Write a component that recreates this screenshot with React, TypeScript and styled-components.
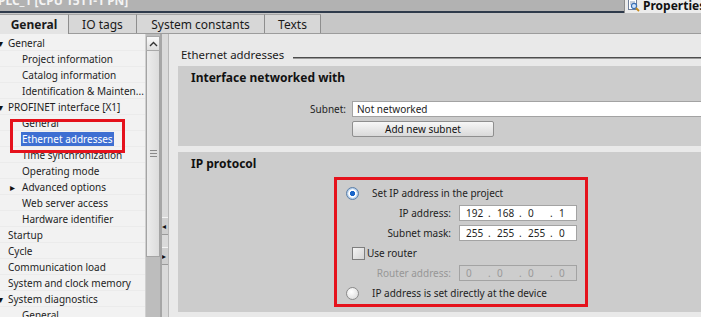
import styled, { createGlobalStyle } from 'styled-components';

const GlobalStyle = createGlobalStyle`
  html, body {
    margin: 0;
    padding: 0;
    background: #e9e9e9;
  }
  body {
    font-family: "Noto Sans", "DejaVu Sans", sans-serif;
    color: #1e1e1e;
  }
`;

type TreeItem = {
  label: string;
  level: 0 | 1;
  arrow?: 'down' | 'right';
  selected?: boolean;
};

const treeItems: TreeItem[] = [
  { label: 'General', level: 0, arrow: 'down' },
  { label: 'Project information', level: 1 },
  { label: 'Catalog information', level: 1 },
  { label: 'Identification & Mainten...', level: 1 },
  { label: 'PROFINET interface [X1]', level: 0, arrow: 'down' },
  { label: 'General', level: 1 },
  { label: 'Ethernet addresses', level: 1, selected: true },
  { label: 'Time synchronization', level: 1 },
  { label: 'Operating mode', level: 1 },
  { label: 'Advanced options', level: 1, arrow: 'right' },
  { label: 'Web server access', level: 1 },
  { label: 'Hardware identifier', level: 1 },
  { label: 'Startup', level: 0 },
  { label: 'Cycle', level: 0 },
  { label: 'Communication load', level: 0 },
  { label: 'System and clock memory', level: 0 },
  { label: 'System diagnostics', level: 0, arrow: 'down' },
  { label: 'General', level: 1 },
];

const tabs = ['General', 'IO tags', 'System constants', 'Texts'];
const tabWidths = [69, 68, 128, 56];

// 4 octets of an IP like field
const IpValue = ({ parts, disabled }: { parts: string[]; disabled?: boolean }) => (
  <IpField $disabled={disabled}>
    {parts.map((p, i) => (
      <Octet key={i}>
        <OctetNum>{p}</OctetNum>
        {i < 3 && <OctetDot>.</OctetDot>}
      </Octet>
    ))}
  </IpField>
);

const PropertiesIcon = () => (
  <svg width="13" height="13" viewBox="0 0 13 13">
    <rect x="1.5" y="0.5" width="8" height="10" fill="#ffffff" stroke="#6f7f9a" />
    <line x1="3" y1="3" x2="8" y2="3" stroke="#8fa0bd" />
    <line x1="3" y1="5" x2="7" y2="5" stroke="#8fa0bd" />
    <circle cx="7" cy="7" r="2.6" fill="#cfe3fb" stroke="#3a6fb5" strokeWidth="1.2" />
    <line x1="9" y1="9" x2="12" y2="12" stroke="#c68a1d" strokeWidth="1.8" />
  </svg>
);

export default function App() {
  return (
    <>
      <GlobalStyle />
      <Root>
        <TitleBar>
          <TitleArea>
            <TitleText>PLC_1 [CPU 1511-1 PN]</TitleText>
          </TitleArea>
          <PropertiesTab>
            <PropertiesIcon />
            <span>Properties</span>
          </PropertiesTab>
        </TitleBar>

        <TabStrip>
          {tabs.map((t, i) => (
            <Tab key={t} $active={i === 0} $width={tabWidths[i]}>
              {t}
            </Tab>
          ))}
        </TabStrip>

        <Body>
          <Tree>
            {treeItems.map((item, i) => (
              <TreeRow key={i} $level={item.level}>
                {item.arrow && <Arrow $level={item.level}>{item.arrow === 'down' ? '▾' : '▸'}</Arrow>}
                <TreeLabel $selected={item.selected}>{item.label}</TreeLabel>
              </TreeRow>
            ))}
            <Highlight />
          </Tree>

          <ScrollBar>
            <ScrollButton>
              <svg width="9" height="6" viewBox="0 0 9 6">
                <path d="M1 5 L4.5 1.5 L8 5" fill="none" stroke="#333" strokeWidth="1.4" />
              </svg>
            </ScrollButton>
            <Thumb>
              <Grip />
            </Thumb>
          </ScrollBar>

          <Splitter>
            <SplitButton>◂</SplitButton>
            <SplitButton>▸</SplitButton>
          </Splitter>

          <Main>
            <HeadingRow>
              <HeadingText>Ethernet addresses</HeadingText>
              <Rule />
            </HeadingRow>

            <Panel $height={80}>
              <PanelTitle>Interface networked with</PanelTitle>
              <SubnetRow>
                <SubnetLabel>Subnet:</SubnetLabel>
                <TextField>Not networked</TextField>
              </SubnetRow>
              <Button>Add new subnet</Button>
            </Panel>

            <Panel $height={160}>
              <PanelTitle>IP protocol</PanelTitle>
              <Marked>
                <FormRow>
                  <Radio $checked />
                  <RadioLabel>Set IP address in the project</RadioLabel>
                </FormRow>
                <FormRow>
                  <FieldLabel>IP address:</FieldLabel>
                  <IpValue parts={['192', '168', '0', '1']} />
                </FormRow>
                <FormRow>
                  <FieldLabel>Subnet mask:</FieldLabel>
                  <IpValue parts={['255', '255', '255', '0']} />
                </FormRow>
                <FormRow>
                  <Checkbox />
                  <CheckLabel>Use router</CheckLabel>
                </FormRow>
                <FormRow>
                  <FieldLabel $disabled>Router address:</FieldLabel>
                  <IpValue parts={['0', '0', '0', '0']} disabled />
                </FormRow>
                <FormRow>
                  <Radio />
                  <RadioLabel>IP address is set directly at the device</RadioLabel>
                </FormRow>
              </Marked>
            </Panel>
          </Main>
        </Body>
      </Root>
    </>
  );
}

const Root = styled.div`
  width: 701px;
  height: 317px;
  overflow: hidden;
  display: flex;
  flex-direction: column;
  background: #e9e9e9;
`;

const TitleBar = styled.div`
  display: flex;
  height: 13px;
  flex-shrink: 0;
`;

const TitleArea = styled.div`
  flex: 1;
  height: 11px;
  background: #b2b2b2;
  border-bottom: 2px solid #2e3a4b;
  overflow: hidden;
`;

const TitleText = styled.div`
  margin: -6px 0 0 -2px;
  font-size: 12px;
  font-weight: bold;
  line-height: 14px;
  color: #f4f4f4;
  white-space: nowrap;
`;

const PropertiesTab = styled.div`
  width: 74px;
  height: 13px;
  display: flex;
  align-items: center;
  gap: 3px;
  padding-left: 2px;
  background: #ececec;
  border-left: 1px solid #8c8c8c;
  overflow: hidden;
  font-size: 12px;
  font-weight: bold;
  color: #111;
  white-space: nowrap;

  svg {
    flex-shrink: 0;
    margin-top: -3px;
  }
  span {
    margin-top: -2px;
  }
`;

const TabStrip = styled.div`
  height: 20px;
  flex-shrink: 0;
  display: flex;
  align-items: flex-end;
  background: #c7c7c7;
  border-bottom: 1px solid #9c9c9c;
`;

const Tab = styled.div<{ $active?: boolean; $width: number }>`
  box-sizing: border-box;
  width: ${(p) => p.$width}px;
  height: ${(p) => (p.$active ? 20 : 19)}px;
  margin-bottom: ${(p) => (p.$active ? -1 : 0)}px;
  display: flex;
  align-items: center;
  justify-content: center;
  background: ${(p) => (p.$active ? '#e4e4e4' : '#d7d7d7')};
  border-top: 1px solid #a5a5a5;
  border-right: 1px solid #8e8e8e;
  font-size: 12px;
  font-weight: ${(p) => (p.$active ? 'bold' : 'normal')};
  color: #1a1a1a;
  white-space: nowrap;
`;

const Body = styled.div`
  flex: 1;
  display: flex;
  min-height: 0;
`;

const Tree = styled.div`
  position: relative;
  width: 145px;
  flex-shrink: 0;
  padding-top: 1px;
  background: #f2f2f2;
  overflow: hidden;
`;

const TreeRow = styled.div<{ $level: number }>`
  position: relative;
  height: 16px;
  display: flex;
  align-items: center;
  padding-left: ${(p) => (p.$level === 0 ? 8 : 22)}px;
  border-bottom: 1px solid #ebebeb;
  box-sizing: border-box;
  font-size: 10px;
  white-space: nowrap;
`;

const Arrow = styled.span<{ $level: number }>`
  position: absolute;
  left: ${(p) => (p.$level === 0 ? -2 : 10)}px;
  top: 1px;
  font-size: 10px;
  line-height: 14px;
  color: #111;
`;

const TreeLabel = styled.span<{ $selected?: boolean }>`
  padding: 0 1px;
  margin-left: -1px;
  line-height: 14px;
  background: ${(p) => (p.$selected ? '#3e6fd2' : 'transparent')};
  color: ${(p) => (p.$selected ? '#ffffff' : '#1e1e1e')};
`;

// red annotation frame drawn over the tree
const Highlight = styled.div`
  position: absolute;
  left: 10px;
  top: 85px;
  width: 115px;
  height: 34px;
  box-sizing: border-box;
  border: 3px solid #e5121c;
  pointer-events: none;
`;

const ScrollBar = styled.div`
  width: 14px;
  flex-shrink: 0;
  display: flex;
  flex-direction: column;
  padding-top: 2px;
  background: #bdbdbd;
  border-left: 1px solid #d0d0d0;
`;

const ScrollButton = styled.div`
  height: 15px;
  box-sizing: border-box;
  display: flex;
  align-items: center;
  justify-content: center;
  background: linear-gradient(#fafafa, #dedede);
  border: 1px solid #a9a9a9;
`;

const Thumb = styled.div`
  height: 206px;
  box-sizing: border-box;
  display: flex;
  align-items: center;
  justify-content: center;
  background: linear-gradient(90deg, #ececec, #dcdcdc);
  border: 1px solid #a4a4a4;
  border-top: none;
`;

const Grip = styled.div`
  width: 7px;
  height: 5px;
  border-top: 1px solid #8a8a8a;
  border-bottom: 1px solid #8a8a8a;
  background: linear-gradient(#e0e0e0 40%, #8a8a8a 40%, #8a8a8a 60%, #e0e0e0 60%);
`;

const Splitter = styled.div`
  width: 6px;
  flex-shrink: 0;
  display: flex;
  flex-direction: column;
  gap: 12px;
  padding-top: 183px;
  background: #dadada;
  border-left: 2px solid #a6a6a6;
  border-right: 1px solid #b8b8b8;
  margin-right: 9px;
`;

const SplitButton = styled.div`
  height: 16px;
  display: flex;
  align-items: center;
  font-size: 8px;
  line-height: 8px;
  color: #111;
  background: #cfcfcf;
  border-top: 1px solid #f4f4f4;
  border-bottom: 1px solid #9a9a9a;
  overflow: hidden;
`;

const Main = styled.div`
  flex: 1;
  min-width: 0;
  display: flex;
  flex-direction: column;
  overflow: hidden;
`;

const HeadingRow = styled.div`
  display: flex;
  height: 14px;
  margin: 14px 0 4px 3px;
`;

const HeadingText = styled.div`
  font-size: 11.4px;
  line-height: 14px;
  color: #1a1a1a;
  white-space: nowrap;
`;

const Rule = styled.div`
  flex: 1;
  height: 0;
  margin: 9px 0 0 9px;
  border-top: 1px solid #4d4d4d;
  border-bottom: 1px solid #9a9a9a;
`;

const Panel = styled.div<{ $height: number }>`
  flex-shrink: 0;
  height: ${(p) => p.$height}px;
  box-sizing: border-box;
  margin-bottom: 6px;
  padding: 5px 0 0 13px;
  background: #cccccc;
  display: flex;
  flex-direction: column;
  align-items: flex-start;
`;

const PanelTitle = styled.div`
  font-size: 12px;
  font-weight: bold;
  line-height: 14px;
  color: #111;
`;

const SubnetRow = styled.div`
  align-self: stretch;
  display: flex;
  align-items: center;
  gap: 6px;
  margin-top: 16px;
`;

const SubnetLabel = styled.div`
  width: 155px;
  text-align: right;
  font-size: 10px;
`;

const TextField = styled.div`
  flex: 1;
  height: 16px;
  box-sizing: border-box;
  padding-left: 4px;
  background: #ffffff;
  border: 1px solid #a3a3a3;
  border-right: none;
  font-size: 10px;
  line-height: 14px;
  white-space: nowrap;
`;

const Button = styled.div`
  width: 142px;
  height: 16px;
  box-sizing: border-box;
  margin: 4px 0 0 161px;
  display: flex;
  align-items: center;
  justify-content: center;
  background: linear-gradient(#f7f7f7, #d9d9d9);
  border: 1px solid #8f8f8f;
  border-radius: 2px;
  font-size: 10px;
  color: #111;
`;

const Marked = styled.div`
  width: 254px;
  height: 130px;
  box-sizing: border-box;
  margin: 6px 0 0 143px;
  padding-top: 3px;
  border: 3px solid #e5121c;
  display: flex;
  flex-direction: column;
`;

const FormRow = styled.div`
  height: 20px;
  display: flex;
  align-items: center;
  font-size: 10px;
  white-space: nowrap;
`;

const Radio = styled.div<{ $checked?: boolean }>`
  width: 13px;
  height: 13px;
  box-sizing: border-box;
  margin-left: 9px;
  border-radius: 50%;
  border: 1px solid ${(p) => (p.$checked ? '#5b7fa8' : '#8a8a8a')};
  background: ${(p) =>
    p.$checked
      ? 'radial-gradient(circle, #1b66c9 0 2.4px, #ffffff 2.9px 3.8px, #b9d1ec 4.6px)'
      : 'radial-gradient(circle at 40% 35%, #ffffff, #d6d6d6)'};
`;

const RadioLabel = styled.span`
  margin-left: 13px;
`;

const Checkbox = styled.div`
  width: 13px;
  height: 13px;
  box-sizing: border-box;
  margin-left: 15px;
  border: 1px solid #7e7e7e;
  background: linear-gradient(135deg, #f4f4f4, #d4d4d4);
`;

const CheckLabel = styled.span`
  margin-left: 2px;
`;

const FieldLabel = styled.div<{ $disabled?: boolean }>`
  width: 114px;
  margin-right: 8px;
  text-align: right;
  color: ${(p) => (p.$disabled ? '#979797' : '#1e1e1e')};
`;

const IpField = styled.div<{ $disabled?: boolean }>`
  width: 118px;
  height: 16px;
  box-sizing: border-box;
  display: flex;
  align-items: center;
  padding-left: 6px;
  background: ${(p) => (p.$disabled ? '#cdcdcd' : '#ffffff')};
  border: 1px solid #a3a3a3;
  color: ${(p) => (p.$disabled ? '#9a9a9a' : '#1e1e1e')};
`;

const Octet = styled.div`
  display: flex;
`;

const OctetNum = styled.span`
  width: 22px;
`;

const OctetDot = styled.span`
  width: 9px;
`;
